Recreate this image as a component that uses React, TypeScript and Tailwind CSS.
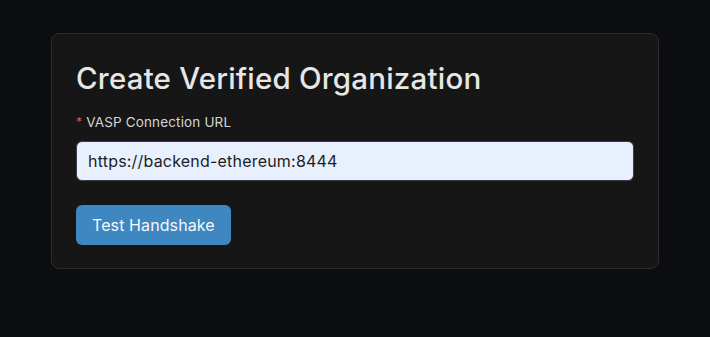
export default function App() {
  return (
    <div className="min-h-[337px] w-full bg-[#0c0d11] pt-[33px] px-[51px]" style={{ fontFamily: 'Inter, "Noto Sans", sans-serif' }}>
      <div className="w-[608px] h-[236px] rounded-lg border border-[#2c2c2e] bg-[#161616] px-[24px] pt-[26px]">
        <h1 className="text-[29.5px] leading-[37px] font-medium text-[#e6e6e6] tracking-[0.2px]">Create Verified Organization</h1>
        <label className="mt-[16px] flex items-center text-[13.5px] leading-[18px] tracking-[0.15px] text-[#d4d4d4]">
          <span className="text-[#e2553f] mr-[4px] text-[12px]">*</span>
          VASP Connection URL
        </label>
        <input
          type="text"
          readOnly
          value="https://backend-ethereum:8444"
          className="mt-[10px] block w-[558px] h-[40px] rounded-md border border-[#3a3d45] bg-[#e8f0fe] px-[11px] text-[16px] tracking-[0.2px] text-[#1d1d1f] focus:outline-none"
        />
        <button className="mt-[24px] h-[40px] px-[16px] rounded-md bg-[#3e87c1] text-[16px] tracking-[0.1px] text-[#f4f7fa]">
          Test Handshake
        </button>
      </div>
    </div>
  );
}
